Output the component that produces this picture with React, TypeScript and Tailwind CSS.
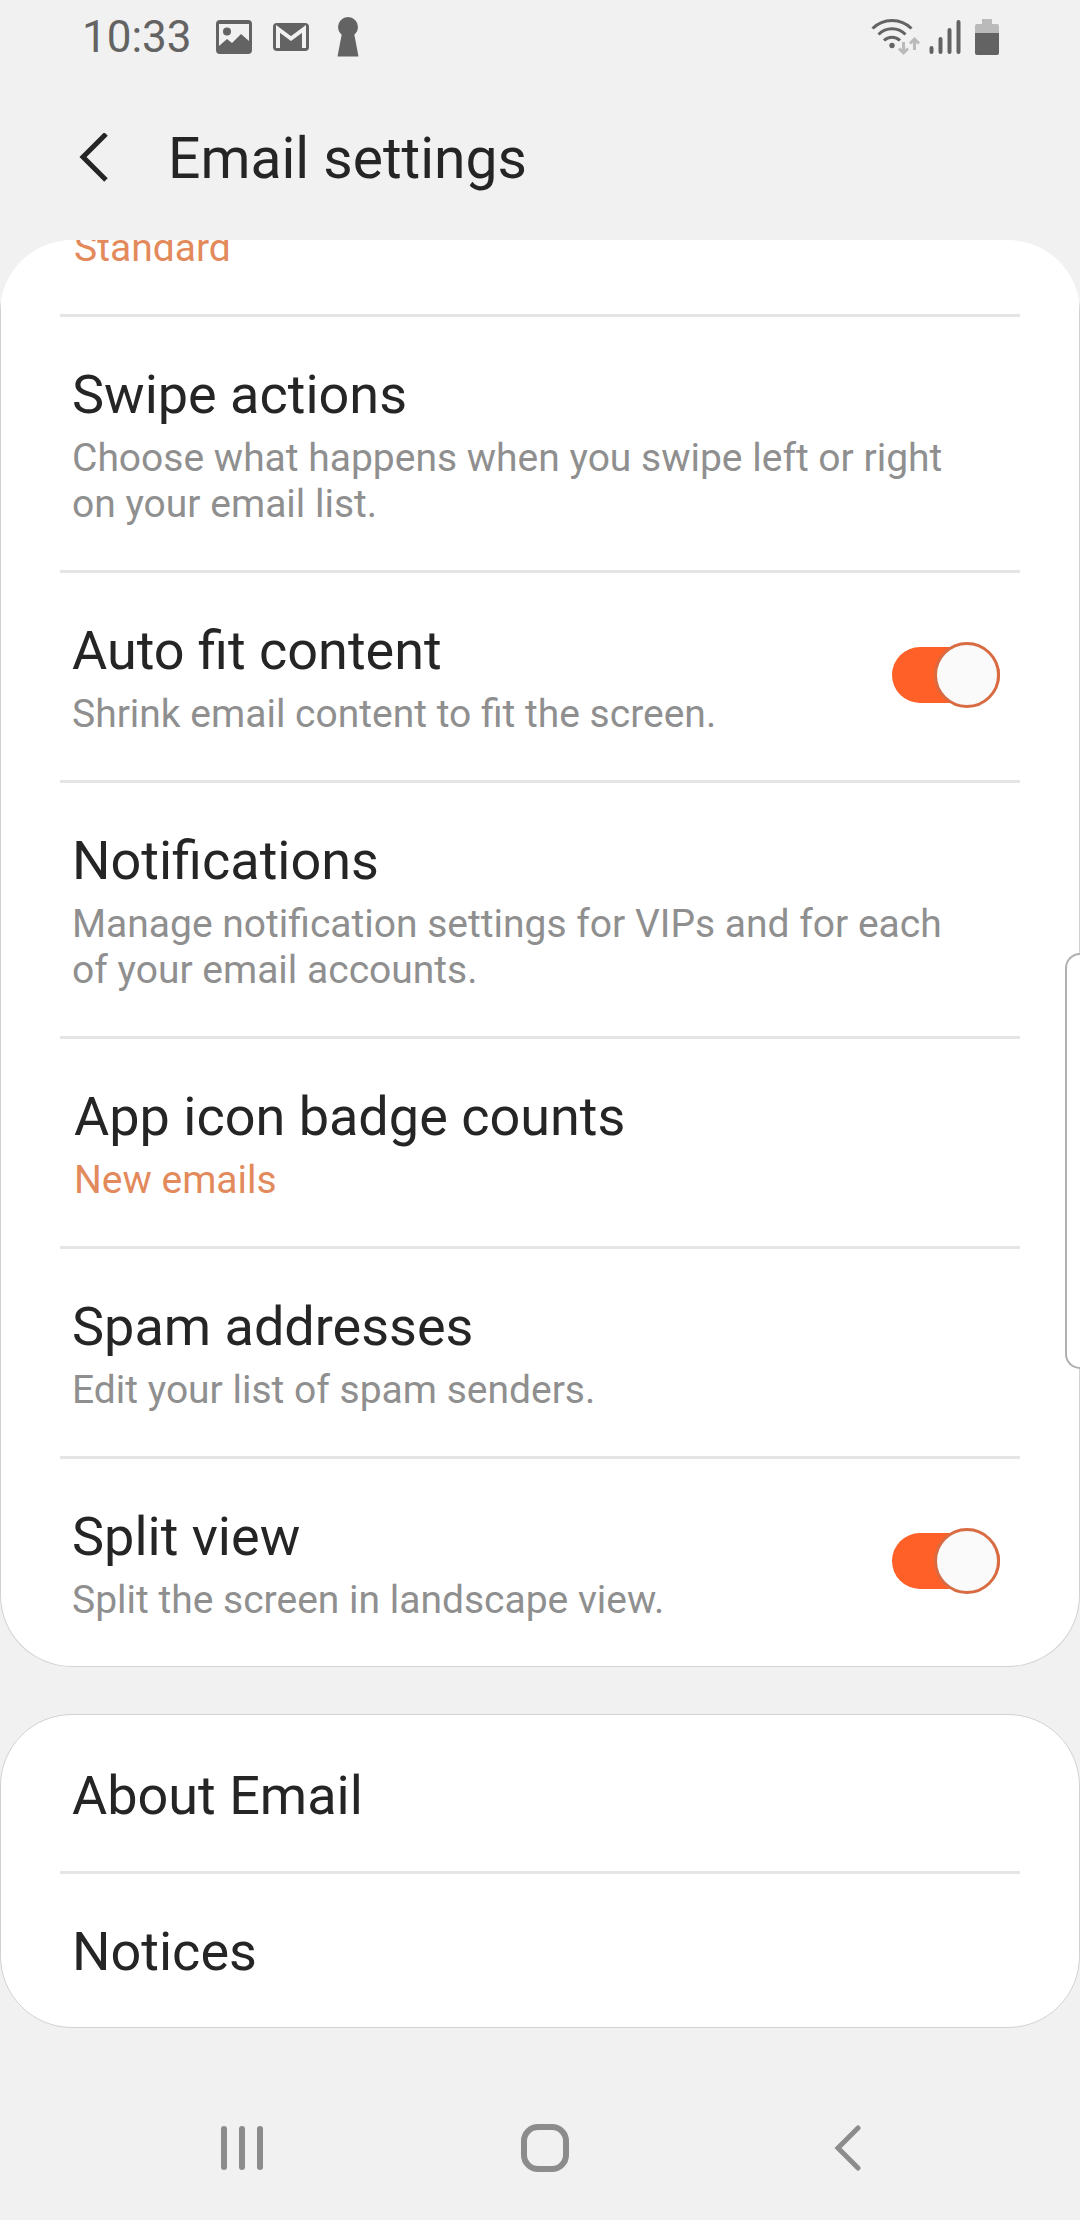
import { useState } from "react";

type Item = {
  title: string;
  desc?: string;
  accent?: boolean;
  toggle?: boolean;
};

const generalItems: Item[] = [
  { title: "Swipe actions", desc: "Choose what happens when you swipe left or right on your email list." },
  { title: "Auto fit content", desc: "Shrink email content to fit the screen.", toggle: true },
  { title: "Notifications", desc: "Manage notification settings for VIPs and for each of your email accounts." },
  { title: "App icon badge counts", desc: "New emails", accent: true },
  { title: "Spam addresses", desc: "Edit your list of spam senders." },
  { title: "Split view", desc: "Split the screen in landscape view.", toggle: true },
];

export default function EmailSettings() {
  return (
    <div className="relative min-h-screen flex flex-col bg-[#f1f1f1] font-['Roboto',sans-serif] text-[#252525]">
      <StatusBar />

      {/* Header */}
      <header className="flex items-center h-[166px] pt-1 pl-[60px]">
        <button aria-label="Navigate up" className="w-[108px] pl-4">
          <svg viewBox="0 0 32 52" className="w-8 h-[52px]" fill="none" stroke="currentColor" strokeWidth="5">
            <path d="M30 1L7 24l23 23" />
          </svg>
        </button>
        <h1 className="text-[57px] leading-[68px]">Email settings</h1>
      </header>

      <main className="flex flex-col gap-[47px]">
        <div className="overflow-hidden rounded-t-[72px]">
          <section className="bg-white border border-t-0 border-[#d2d2d2] rounded-b-[72px]">
            {/* Row that is scrolled halfway under the header */}
            <div className="h-[74px] overflow-hidden flex flex-col justify-end pl-[73px] pb-[43px]">
              <p className="text-[39px] leading-[46px] text-[#e38a5c]">Standard</p>
            </div>
            {generalItems.map((item) => (
              <SettingRow key={item.title} {...item} />
            ))}
          </section>
        </div>

        <section className="bg-white border border-[#d2d2d2] rounded-[72px] pt-[3px]">
          <LinkRow title="About Email" />
          <div className="mx-[59px] h-[3px] bg-[#e5e5e5]" />
          <LinkRow title="Notices" />
        </section>
      </main>

      {/* Edge panel handle */}
      <div className="absolute right-0 top-[953px] w-[15px] h-[416px] bg-white border-2 border-r-0 border-[#b0b0b0] rounded-l-[18px]" />

      <NavBar />
    </div>
  );
}

function SettingRow({ title, desc, accent, toggle }: Item) {
  const [on, setOn] = useState(true);
  const text = (
    <span className="block max-w-[890px] pt-[46px] pb-10">
      <span className="block text-[54px] leading-[64px]">{title}</span>
      <span className={`block mt-2 text-[39px] leading-[46px] ${accent ? "text-[#e38a5c]" : "text-[#8f8f8f]"}`}>
        {desc}
      </span>
    </span>
  );

  return (
    <div className="mx-[59px] border-t-[3px] border-[#e5e5e5]">
      {toggle ? (
        <label className="flex items-center justify-between pl-3 pr-5 pb-[3px]">
          {text}
          <input
            type="checkbox"
            role="switch"
            className="sr-only"
            checked={on}
            onChange={(e) => setOn(e.target.checked)}
          />
          <Switch on={on} />
        </label>
      ) : (
        <button className={`block w-full text-left pb-[3px] ${accent ? "pl-[14px]" : "pl-3"}`}>{text}</button>
      )}
    </div>
  );
}

function Switch({ on }: { on: boolean }) {
  return (
    <span className={`relative flex items-center w-[108px] h-[66px] shrink-0 ${on ? "justify-end" : "justify-start"}`}>
      <span className={`absolute inset-x-0 top-[5px] h-14 rounded-full ${on ? "bg-[#ff6028]" : "bg-[#c4c4c4]"}`} />
      <span className={`relative size-[66px] rounded-full border-[3px] bg-[#fafafa] ${on ? "border-[#d96b43]" : "border-[#a0a0a0]"}`} />
    </span>
  );
}

function LinkRow({ title }: { title: string }) {
  return (
    <a href="#" className="block pl-[71px] pt-[46px] pb-[43px] text-[54px] leading-[64px]">
      {title}
    </a>
  );
}

function StatusBar() {
  return (
    <div className="flex items-center justify-between h-[74px] pl-[82px] pr-[81px] text-[#636363]">
      <div className="flex items-center">
        <span className="text-[44px] leading-[52px]">10:33</span>
        <svg viewBox="0 0 36 34" className="ml-6 w-9 h-[34px]" fill="currentColor">
          <path fillRule="evenodd" d="M4 0h28a4 4 0 0 1 4 4v26a4 4 0 0 1-4 4H4a4 4 0 0 1-4-4V4a4 4 0 0 1 4-4zM3 4v22l8-7 5 4 9-9 8 7V4z" />
          <circle cx="11" cy="11.500" r="4" />
        </svg>
        <svg viewBox="0 0 36 28" className="ml-[21px] w-9 h-7">
          <rect width="36" height="28" rx="4" fill="currentColor" />
          <path d="M5 25V6l13 9.500L31 6v19" fill="none" stroke="#f1f1f1" strokeWidth="4" />
        </svg>
        <svg viewBox="0 0 22 40" className="ml-7 w-[22px] h-10" fill="currentColor">
          <circle cx="11" cy="10" r="10" />
          <path d="M5 16h12l4.500 23.500h-21z" />
        </svg>
      </div>

      <div className="flex items-center">
        <svg viewBox="0 0 50 38" className="w-[50px] h-[38px]" fill="none" stroke="currentColor" strokeWidth="3">
          <path d="M1.500 10.500a27.500 27.500 0 0 1 39 0M7.500 16.500a19 19 0 0 1 27 0M13 22.500a11.500 11.500 0 0 1 16 0" />
          <circle cx="21" cy="27.500" r="2.700" fill="currentColor" stroke="none" />
          <path d="M32.500 24v10M28 30.500l4.500 4.500 4.500-4.500M43.500 32V21.500M39 25.500l4.500-4.500 4.500 4.500" stroke="#bababa" />
        </svg>
        <svg viewBox="0 0 32 36" className="ml-2 w-8 h-9" stroke="currentColor" strokeWidth="4" strokeLinecap="round">
          <path d="M2.500 29v4M11.500 20v13M20.500 11v22M29.500 3v30" />
        </svg>
        <svg viewBox="0 0 24 36" className="ml-[14px] w-6 h-9">
          <path d="M7 0h10v5h5a2 2 0 0 1 2 2v7H0V7a2 2 0 0 1 2-2h5z" fill="#bababa" />
          <path d="M0 14h24v20a2 2 0 0 1-2 2H2a2 2 0 0 1-2-2z" fill="currentColor" />
        </svg>
      </div>
    </div>
  );
}

function NavBar() {
  return (
    <nav className="mt-auto grid grid-cols-3 h-[144px] pl-[91px] pr-[81px] text-[#8c8c8c]">
      <button aria-label="Recents" className="flex items-center justify-center">
        <svg viewBox="0 0 44 46" className="w-11 h-[46px]" stroke="currentColor" strokeWidth="6" strokeLinecap="round">
          <path d="M4 4v38M22 4v38M40 4v38" />
        </svg>
      </button>
      <button aria-label="Home" className="flex items-center justify-center">
        <svg viewBox="0 0 48 48" className="size-12" fill="none" stroke="currentColor" strokeWidth="6">
          <rect x="3" y="3" width="42" height="42" rx="14" />
        </svg>
      </button>
      <button aria-label="Back" className="flex items-center justify-center">
        <svg viewBox="0 0 28 46" className="w-7 h-[46px]" fill="none" stroke="currentColor" strokeWidth="5" strokeLinecap="round">
          <path d="M24 3L4 23l20 20" />
        </svg>
      </button>
    </nav>
  );
}
